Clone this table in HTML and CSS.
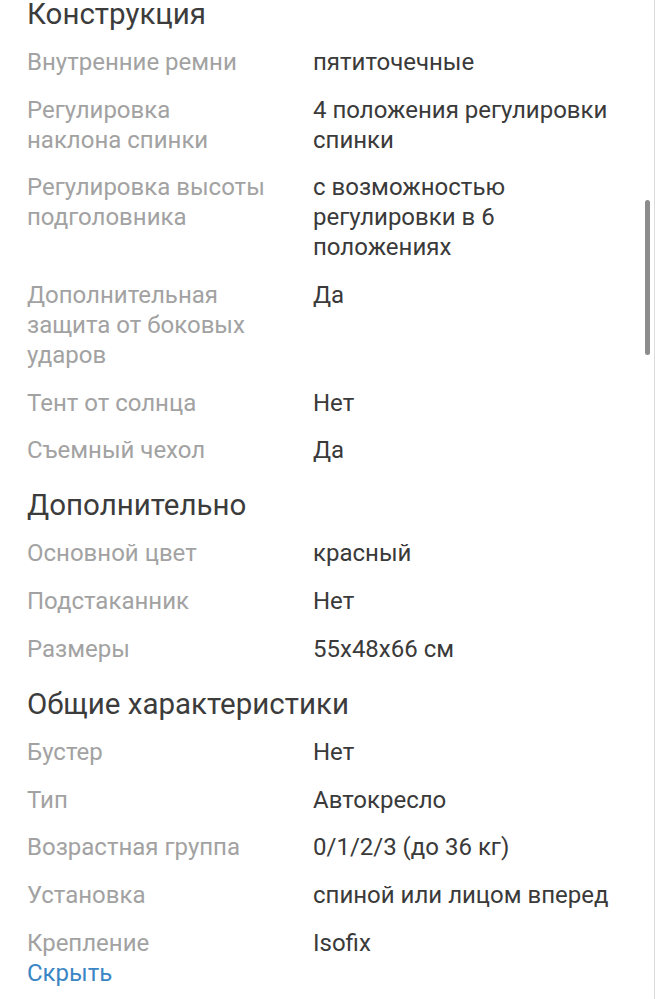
FILE: index.html
```html
<!DOCTYPE html>
<html lang="ru">
<head>
<meta charset="utf-8">
<link rel="stylesheet" href="styles.css">
</head>
<body>
<div class="page">
  <section class="group group-first">
    <h2 class="group-title">Конструкция</h2>
    <dl class="specs">
      <div class="spec"><dt>Внутренние ремни</dt><dd>пятиточечные</dd></div>
      <div class="spec"><dt>Регулировка<br>наклона спинки</dt><dd>4 положения регулировки<br>спинки</dd></div>
      <div class="spec"><dt>Регулировка высоты<br>подголовника</dt><dd>с возможностью<br>регулировки в 6<br>положениях</dd></div>
      <div class="spec"><dt>Дополнительная<br>защита от боковых<br>ударов</dt><dd>Да</dd></div>
      <div class="spec"><dt>Тент от солнца</dt><dd>Нет</dd></div>
      <div class="spec"><dt>Съемный чехол</dt><dd>Да</dd></div>
    </dl>
  </section>
  <section class="group">
    <h2 class="group-title">Дополнительно</h2>
    <dl class="specs">
      <div class="spec"><dt>Основной цвет</dt><dd>красный</dd></div>
      <div class="spec"><dt>Подстаканник</dt><dd>Нет</dd></div>
      <div class="spec"><dt>Размеры</dt><dd>55x48x66 см</dd></div>
    </dl>
  </section>
  <section class="group">
    <h2 class="group-title">Общие характеристики</h2>
    <dl class="specs">
      <div class="spec"><dt>Бустер</dt><dd>Нет</dd></div>
      <div class="spec"><dt>Тип</dt><dd>Автокресло</dd></div>
      <div class="spec"><dt>Возрастная группа</dt><dd>0/1/2/3 (до 36 кг)</dd></div>
      <div class="spec"><dt>Установка</dt><dd>спиной или лицом вперед</dd></div>
      <div class="spec"><dt>Крепление</dt><dd>Isofix</dd></div>
    </dl>
  </section>
  <a class="toggle" href="#">Скрыть</a>
</div>
<div class="scroll-thumb"></div>
</body>
</html>
```

FILE: styles.css
```css
html, body {
  margin: 0;
  padding: 0;
  background: #ffffff;
}

body {
  font-family: Roboto, "Noto Sans", "Liberation Sans", sans-serif;
  color: #3a3a3a;
  height: 999px;
  overflow: hidden;
  box-sizing: border-box;
  border-right: 1px solid #dcdcdc;
}

.page {
  padding: 0 20px 0 27px;
  display: flex;
  flex-direction: column;
}

.group {
  display: flex;
  flex-direction: column;
  margin-top: 22px;
}

.group-first {
  margin-top: 0;
}

.group-title {
  margin: 0 0 15px 0;
  font-size: 29.5px;
  line-height: 36px;
  font-weight: 400;
  color: #3c3c3c;
}

.group-first .group-title {
  line-height: 30px;
  margin-top: -1px;
  margin-bottom: 18px;
}

.specs {
  margin: 0;
  display: flex;
  flex-direction: column;
  gap: 17.7px;
}

.spec {
  display: grid;
  grid-template-columns: 286px 1fr;
  font-size: 24px;
  line-height: 30px;
}

.spec dt {
  color: #a2a2a2;
}

.spec dd {
  margin: 0;
  color: #3a3a3a;
}

.toggle {
  font-size: 24px;
  line-height: 30px;
  color: #3a86c4;
  text-decoration: none;
  align-self: flex-start;
}

.scroll-thumb {
  position: absolute;
  left: 645px;
  top: 200px;
  width: 5px;
  height: 155px;
  border-radius: 3px;
  background: #8c8c8c;
}
```
